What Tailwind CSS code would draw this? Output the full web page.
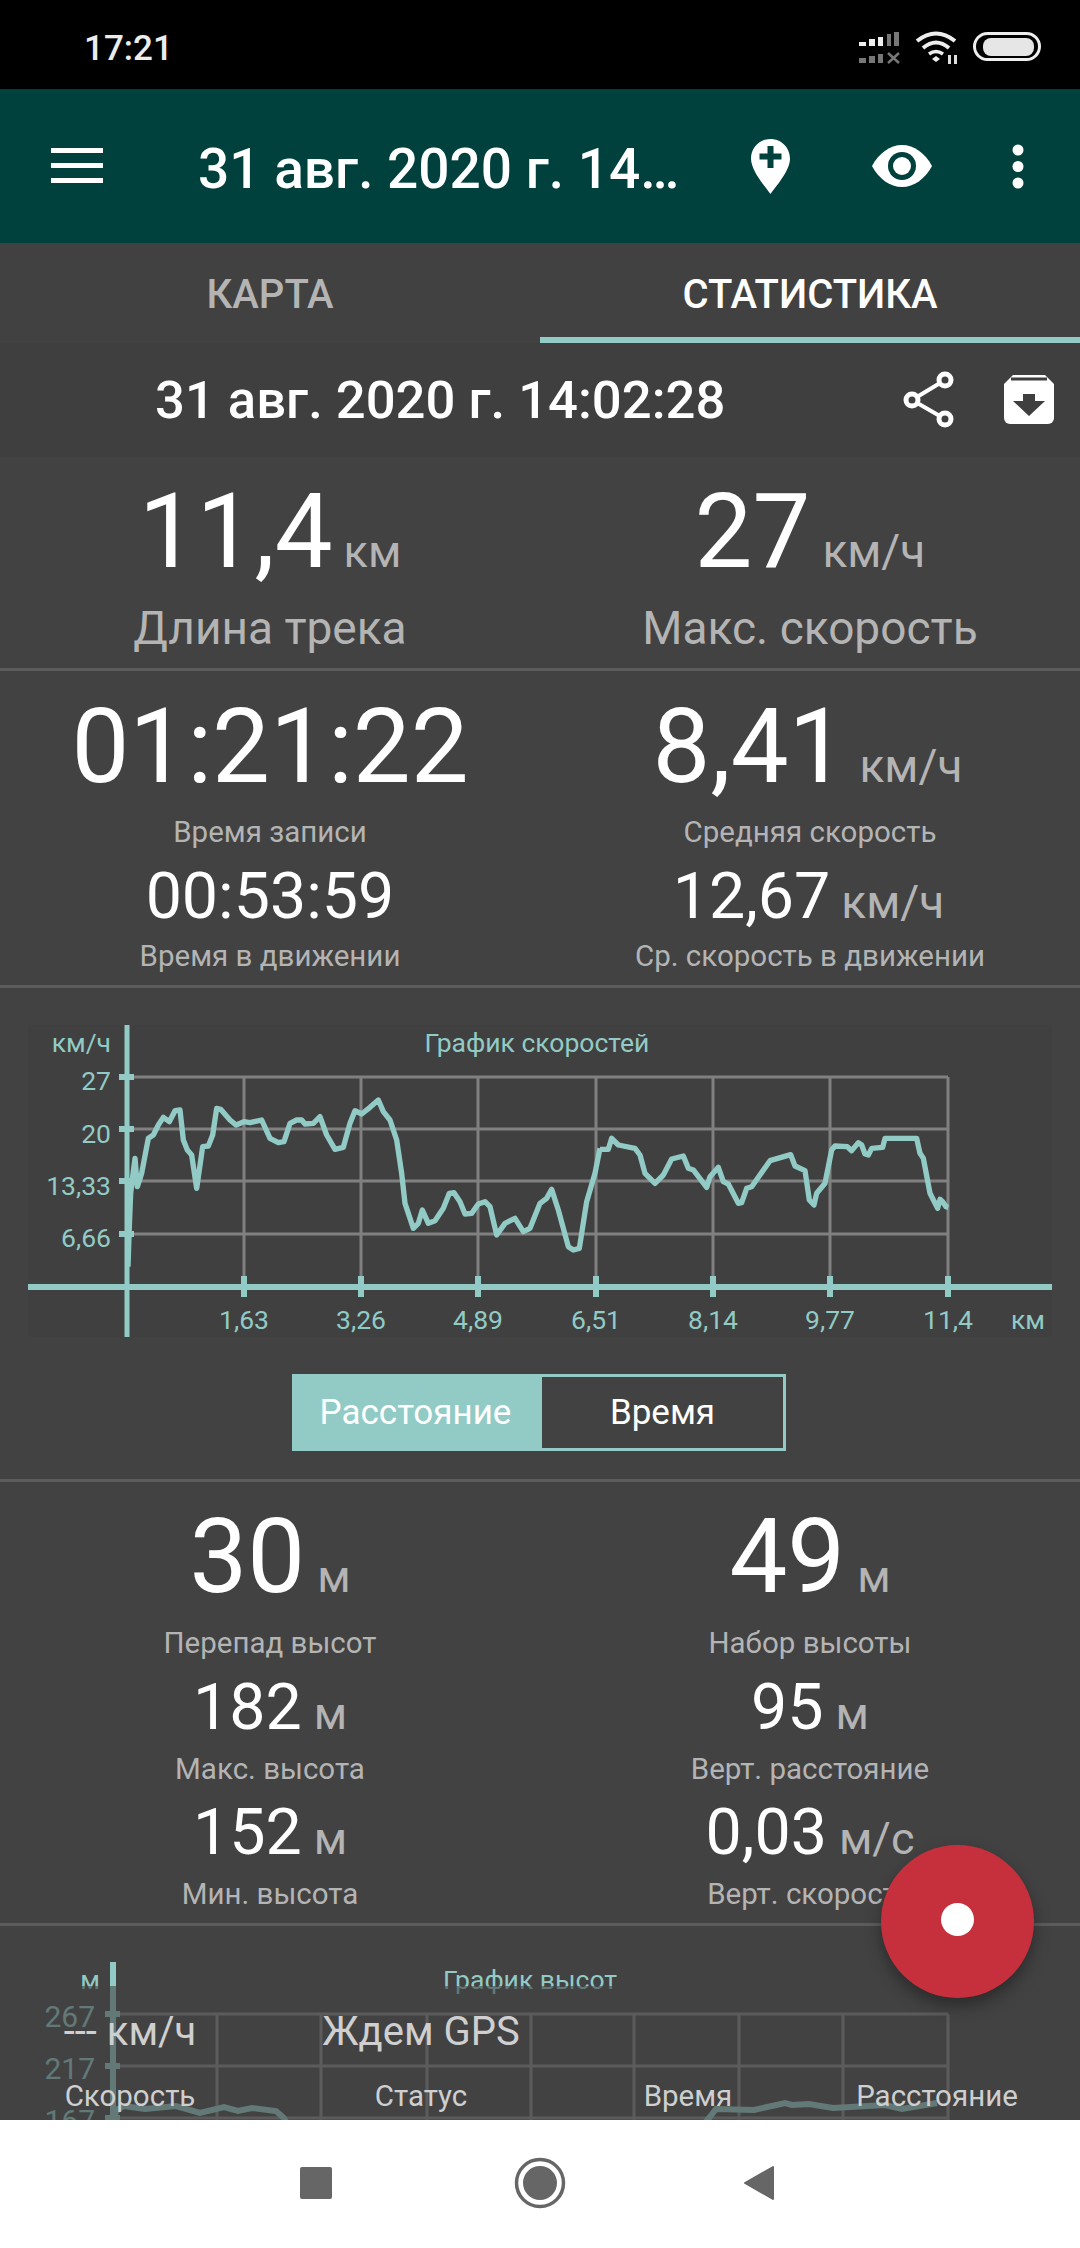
<!DOCTYPE html>
<html lang="ru">
<head>
  <meta charset="UTF-8" />
  <meta name="viewport" content="width=device-width, initial-scale=1.0"/>
  <title>Статистика трека</title>
  <script src="https://cdn.jsdelivr.net/npm/@tailwindcss/browser@4"></script>
</head>
<body class="bg-black">
<div class="relative w-[1080px] h-[2248px] overflow-hidden flex flex-col bg-[#424242] font-[Roboto,sans-serif] text-white">

  <!-- Status bar -->
  <div class="h-[89px] shrink-0 bg-black flex items-center pl-[84px] pr-[35px]">
    <span class="text-[35px] leading-[40px] font-medium text-[#ececec] mt-[8px]">17:21</span>
    <svg class="ml-auto mt-[7px]" width="190" height="36" viewBox="855 30 190 36" fill="none">
      <rect x="859" y="42" width="7" height="4" fill="#eee"/><rect x="869" y="39" width="6" height="7" fill="#eee"/><rect x="878" y="37" width="5" height="9" fill="#eee"/>
      <rect x="887" y="34" width="4" height="12" fill="#777"/><rect x="894" y="32" width="5" height="14" fill="#777"/>
      <rect x="859" y="58" width="7" height="5" fill="#777"/><rect x="869" y="56" width="6" height="7" fill="#777"/><rect x="878" y="54" width="5" height="9" fill="#777"/>
      <path d="M888 53l11 10m0-10l-11 10" stroke="#777" stroke-width="2.500"/>
      <path d="M917 41Q936 26 955 41" stroke="#eee" stroke-width="4"/><path d="M923 48Q936 37 949 48" stroke="#eee" stroke-width="4"/>
      <path d="M929 54Q936 49 943 54" stroke="#eee" stroke-width="3.500"/>
      <path d="M932 59l4-3 4 3-4 3z" fill="#eee"/>
      <path d="M948 55h3v9h-3zM954 55h3v9h-3z" fill="#ddd"/>
      <rect x="974.500" y="33.500" width="65" height="26" rx="13" stroke="#eee" stroke-width="3"/>
      <rect x="983" y="38" width="51" height="18" rx="8" fill="#e6e6e6"/>
    </svg>
  </div>

  <!-- Toolbar -->
  <div class="h-[154px] shrink-0 bg-[#00403d] flex items-center pl-[51px]">
    <div class="w-[52px] flex flex-col gap-[10px] -mt-[2px]">
      <div class="h-[5px] bg-white"></div>
      <div class="h-[5px] bg-white"></div>
      <div class="h-[5px] bg-white"></div>
    </div>
    <div class="ml-[95px] w-[490px] mt-[6px] truncate text-[55px] leading-[68px] font-medium">31 авг. 2020 г. 14:02:28</div>
    <svg class="ml-[63px]" width="39" height="55" viewBox="0 0 39 55">
      <path d="M19.500 0C8.700 0 0 8.700 0 19.500 0 31 12 45 19.500 55 27 45 39 31 39 19.500 39 8.700 30.300 0 19.500 0z" fill="#fff"/>
      <path d="M8.500 17.500h22M19.500 7v22" stroke="#00403d" stroke-width="6"/>
    </svg>
    <svg class="ml-[82px]" width="60" height="42" viewBox="0 0 60 42">
      <path d="M0 21C7 8 18 0 30 0s23 8 30 21c-7 13-18 21-30 21S7 34 0 21z" fill="#fff"/>
      <circle cx="30" cy="21" r="14" fill="#00403d"/><circle cx="30" cy="21" r="9" fill="#fff"/>
    </svg>
    <svg class="ml-[80px]" width="12" height="45" viewBox="0 0 12 45" fill="#fff">
      <circle cx="6" cy="6" r="5.500"/><circle cx="6" cy="22.500" r="5.500"/><circle cx="6" cy="39" r="5.500"/>
    </svg>
  </div>

  <!-- Tabs -->
  <div class="h-[100px] shrink-0 grid grid-cols-2 bg-[#414141] text-[40px] leading-[46px] font-medium">
    <div class="flex items-center justify-center text-[#b4b4b4] pt-[3px]">КАРТА</div>
    <div class="flex items-center justify-center border-b-[6px] border-[#92cbc5] pt-[9px]">СТАТИСТИКА</div>
  </div>

  <!-- Track header -->
  <div class="h-[114px] shrink-0 bg-[#3f3f3f] flex items-center pl-[155px]">
    <div class="w-[570px] text-[52.6px] leading-[60px] font-medium whitespace-nowrap">31 авг. 2020 г. 14:02:28</div>
    <svg class="ml-[178px]" width="42" height="54" viewBox="904 372 42 54" style="overflow:visible">
      <path d="M946 379L913 399L946 418" stroke="#fff" stroke-width="4" fill="none"/>
      <circle cx="946" cy="379" r="6" fill="#3f3f3f" stroke="#fff" stroke-width="5"/>
      <circle cx="913" cy="399" r="6" fill="#3f3f3f" stroke="#fff" stroke-width="5"/>
      <circle cx="946" cy="418" r="6" fill="#3f3f3f" stroke="#fff" stroke-width="5"/>
    </svg>
    <svg class="ml-[59px]" width="50" height="50" viewBox="1005 374 50 50">
      <path d="M1014 374h32l9 9v34a6 6 0 0 1-6 6h-38a6 6 0 0 1-6-6v-34z" fill="#fff"/>
      <path d="M1012 378h36" stroke="#3f3f3f" stroke-width="3"/>
      <path d="M1024 393h12v7h10l-16 15-16-15h10z" fill="#3f3f3f"/>
    </svg>
  </div>

  <!-- Scrolling stats -->
  <div class="relative flex-1 min-h-0 overflow-hidden">

    <!-- Track length and top speed -->
    <div class="grid grid-cols-2 pt-[16px] pb-[13px] border-b-[3px] border-[#5c5c5c]">
      <div class="flex flex-col items-center">
        <div class="h-[118px] flex items-baseline gap-[11px] leading-[118px]"><span class="text-[103px]">11,4</span><span class="text-[45px] text-[#b4b4b4]">км</span></div>
        <div class="mt-[10px] text-[46px] leading-[54px] text-[#b4b4b4]">Длина трека</div>
      </div>
      <div class="flex flex-col items-center">
        <div class="h-[118px] flex items-baseline gap-[12px] leading-[118px]"><span class="text-[103px]">27</span><span class="text-[46px] text-[#b4b4b4]">км/ч</span></div>
        <div class="mt-[10px] text-[46px] leading-[54px] text-[#b4b4b4]">Макс. скорость</div>
      </div>
    </div>

    <!-- Time and average speed -->
    <div class="grid grid-cols-2 pt-[17px] pb-[11px] border-b-[3px] border-[#5c5c5c]">
      <div class="flex flex-col items-center">
        <div class="h-[118px] text-[103px] leading-[118px]">01:21:22</div>
        <div class="mt-[8px] text-[29.5px] leading-[36px] text-[#b4b4b4]">Время записи</div>
        <div class="h-[76px] mt-[8px] text-[64.5px] leading-[76px]">00:53:59</div>
        <div class="mt-[4px] text-[29.5px] leading-[36px] text-[#b4b4b4]">Время в движении</div>
      </div>
      <div class="flex flex-col items-center">
        <div class="h-[118px] pr-[5px] flex items-baseline gap-[13px] leading-[118px]"><span class="text-[103px]">8,41</span><span class="text-[46px] text-[#b4b4b4]">км/ч</span></div>
        <div class="mt-[8px] text-[29.5px] leading-[36px] text-[#b4b4b4]">Средняя скорость</div>
        <div class="h-[76px] mt-[8px] pr-[3px] flex items-baseline gap-[11px] leading-[76px]"><span class="text-[64.5px]">12,67</span><span class="text-[46px] text-[#b4b4b4]">км/ч</span></div>
        <div class="mt-[4px] text-[29.5px] leading-[36px] text-[#b4b4b4]">Ср. скорость в движении</div>
      </div>
    </div>

    <!-- Speed chart -->
    <svg class="block mt-[2px] w-[1080px] h-[370px]" viewBox="0 990 1080 370" font-size="26.500" fill="#92cbc5">
      <rect x="28" y="1025" width="1024" height="312" fill="#404040"/>
      <g stroke="#808080" stroke-width="3" fill="none">
        <path d="M127 1077H948M127 1129H948M127 1181H948M127 1234H948"/>
        <path d="M244 1077V1287M361 1077V1287M478 1077V1287M596 1077V1287M713 1077V1287M830 1077V1287M948 1077V1287"/>
      </g>
      <g stroke="#92cbc5" fill="none">
        <path d="M127 1025V1337" stroke-width="5"/>
        <path d="M28 1287H1052" stroke-width="6"/>
        <path d="M119 1077H134M119 1129H134M119 1181H134M119 1234H134" stroke-width="6"/>
        <path d="M244 1276V1297M361 1276V1297M478 1276V1297M596 1276V1297M713 1276V1297M830 1276V1297M948 1276V1297" stroke-width="6"/>
      </g>
      <g transform="translate(100 1060) scale(.33333)" stroke="#92cbc5" stroke-width="16" fill="none" stroke-linejoin="round">
        <polyline points="84,620 88,500 92,400 98,350 105,295 112,380 125,340 145,235 160,225 175,195 190,172 208,185 225,152 240,150 250,240 262,270 275,285 290,385 308,260 325,258 338,225 350,145 362,148 390,180 408,195 432,185 450,188 485,180 510,235 535,248 552,245 570,190 590,180 605,180 615,192 640,190 660,170 680,225 705,268 730,262 750,190 765,152 785,162 810,142 835,120 850,155 870,180 890,240 905,340 915,430 940,505 955,490 967,450 985,490 1005,482 1030,445 1048,400 1062,398 1080,425 1095,462 1115,460 1135,432 1155,425 1170,440 1190,525 1215,490 1245,475 1270,515 1290,505 1320,430 1340,415 1355,388 1375,450 1405,560 1420,570 1438,565 1460,425 1485,340 1500,265"/>
      </g>
      <g transform="translate(560 1060) scale(.33333)" stroke="#92cbc5" stroke-width="16" fill="none" stroke-linejoin="round">
        <polyline points="120,268 145,268 155,235 175,255 225,265 240,285 255,340 285,370 310,345 335,297 370,288 385,325 400,330 440,382 450,350 475,322 490,365 505,372 535,430 545,428 560,385 575,380 630,302 692,284 705,318 735,332 748,420 762,435 770,400 795,370 815,270 825,258 862,260 875,272 895,248 905,255 915,282 925,285 935,265 968,262 975,235 1070,235 1080,280 1090,295 1110,400 1133,445 1140,418 1148,425 1158,440 1165,442"/>
      </g>
      <g text-anchor="end">
        <text x="111" y="1052">км/ч</text>
        <text x="111" y="1090">27</text>
        <text x="111" y="1143">20</text>
        <text x="111" y="1195">13,33</text>
        <text x="111" y="1247">6,66</text>
        <text x="1045" y="1329">км</text>
      </g>
      <g text-anchor="middle">
        <text x="537" y="1052">График скоростей</text>
        <text x="244" y="1329">1,63</text>
        <text x="361" y="1329">3,26</text>
        <text x="478" y="1329">4,89</text>
        <text x="596" y="1329">6,51</text>
        <text x="713" y="1329">8,14</text>
        <text x="830" y="1329">9,77</text>
        <text x="948" y="1329">11,4</text>
      </g>
    </svg>

    <!-- Distance / time switch -->
    <div class="mt-[14px] ml-[292px] w-[494px] h-[77px] flex border-[3px] border-[#92cbc5] text-[35px] leading-[42px]">
      <div class="w-[247px] bg-[#92cbc5] flex items-center justify-center pr-[6px]">Расстояние</div>
      <div class="flex-1 flex items-center justify-center">Время</div>
    </div>
    <div class="mt-[28px] border-b-[3px] border-[#5c5c5c]"></div>

    <!-- Elevation -->
    <div class="grid grid-cols-2 pt-[16px] pb-[11px] border-b-[3px] border-[#5c5c5c]">
      <div class="flex flex-col items-center">
        <div class="h-[118px] flex items-baseline gap-[12px] leading-[118px]"><span class="text-[103px]">30</span><span class="text-[45px] text-[#b4b4b4]">м</span></div>
        <div class="mt-[9px] text-[29.5px] leading-[36px] text-[#b4b4b4]">Перепад высот</div>
        <div class="h-[76px] mt-[8px] flex items-baseline gap-[12px] leading-[76px]"><span class="text-[64.5px]">182</span><span class="text-[45px] text-[#b4b4b4]">м</span></div>
        <div class="mt-[6px] text-[29.5px] leading-[36px] text-[#b4b4b4]">Макс. высота</div>
        <div class="h-[76px] mt-[7px] flex items-baseline gap-[12px] leading-[76px]"><span class="text-[64.5px]">152</span><span class="text-[45px] text-[#b4b4b4]">м</span></div>
        <div class="mt-[6px] text-[29.5px] leading-[36px] text-[#b4b4b4]">Мин. высота</div>
      </div>
      <div class="flex flex-col items-center">
        <div class="h-[118px] flex items-baseline gap-[12px] leading-[118px]"><span class="text-[103px]">49</span><span class="text-[45px] text-[#b4b4b4]">м</span></div>
        <div class="mt-[9px] text-[29.5px] leading-[36px] text-[#b4b4b4]">Набор высоты</div>
        <div class="h-[76px] mt-[8px] flex items-baseline gap-[12px] leading-[76px]"><span class="text-[64.5px]">95</span><span class="text-[45px] text-[#b4b4b4]">м</span></div>
        <div class="mt-[6px] text-[29.5px] leading-[36px] text-[#b4b4b4]">Верт. расстояние</div>
        <div class="h-[76px] mt-[7px] flex items-baseline gap-[12px] leading-[76px]"><span class="text-[64.5px]">0,03</span><span class="text-[45px] text-[#b4b4b4]">м/с</span></div>
        <div class="mt-[6px] text-[29.5px] leading-[36px] text-[#b4b4b4]">Верт. скорость</div>
      </div>
    </div>

    <!-- Elevation chart, cut off by the live panel and the nav bar -->
    <svg class="block w-[1080px] h-[197px]" viewBox="0 1925 1080 197" font-size="26.500" fill="#92cbc5">
      <g stroke="#808080" stroke-width="3" fill="none">
        <path d="M112 2013H948M112 2065H948M112 2117H948"/>
        <path d="M217 2013V2121M321 2013V2121M427 2013V2121M531 2013V2121M634 2013V2121M739 2013V2121M843 2013V2121M948 2013V2121"/>
      </g>
      <g stroke="#92cbc5" fill="none">
        <path d="M113 1961V2121" stroke-width="6"/>
        <path d="M105 2013H120M105 2065H120M105 2117H120" stroke-width="6"/>
      </g>
      <polyline points="112,2118 118,2108 124,2105 145,2108 176,2105 200,2112 224,2106 238,2110 252,2107 276,2110 284,2117 287,2123" fill="none" stroke="#92cbc5" stroke-width="6"/>
      <polyline points="704,2123 709,2117 716,2108 754,2109 785,2102 792,2104 809,2103 833,2107 885,2104 902,2108 937,2102" fill="none" stroke="#92cbc5" stroke-width="6"/>
      <text x="100" y="1988" text-anchor="end">м</text>
      <text x="530" y="1988" text-anchor="middle">График высот</text>
      <g text-anchor="end" font-size="30">
        <text x="95" y="2026">267</text>
        <text x="95" y="2078">217</text>
        <text x="95" y="2130">167</text>
      </g>
    </svg>

    <!-- Live GPS panel over the chart -->
    <div class="absolute left-0 right-0 bottom-0 h-[134px] bg-[#424242]/60 grid grid-cols-[260px_322px_212px_286px] text-center text-[#cfcfcf]">
      <div class="flex flex-col items-center">
        <div class="h-[92px] pt-[20px] text-[40px] leading-[52px]">--- км/ч</div>
        <div class="text-[29.5px] leading-[36px]">Скорость</div>
      </div>
      <div class="flex flex-col items-center">
        <div class="h-[92px] pt-[20px] text-[40px] leading-[52px]">Ждем GPS</div>
        <div class="text-[29.5px] leading-[36px]">Статус</div>
      </div>
      <div class="flex flex-col items-center">
        <div class="h-[92px]"></div>
        <div class="text-[29.5px] leading-[36px]">Время</div>
      </div>
      <div class="flex flex-col items-center">
        <div class="h-[92px]"></div>
        <div class="text-[29.5px] leading-[36px]">Расстояние</div>
      </div>
    </div>
  </div>

  <!-- Nav bar -->
  <div class="h-[128px] shrink-0 bg-white flex items-center pb-[3px]">
    <div class="ml-[300px] w-[32px] h-[32px] rounded-[2px] bg-[#666666]"></div>
    <svg class="ml-[182px]" width="52" height="52" viewBox="0 0 52 52">
      <circle cx="26" cy="26" r="23.500" fill="none" stroke="#666666" stroke-width="3.500"/>
      <circle cx="26" cy="26" r="17" fill="#666666"/>
    </svg>
    <svg class="ml-[177px]" width="32" height="36" viewBox="0 0 32 36">
      <path d="M30 2v32L2 18z" fill="#666666" stroke="#666666" stroke-width="2" stroke-linejoin="round"/>
    </svg>
  </div>

  <!-- Record button -->
  <div class="absolute right-[46px] bottom-[250px] w-[153px] h-[153px] rounded-full bg-[#c6303c] shadow-[0_8px_16px_rgba(0,0,0,0.35)] flex items-center justify-center">
    <div class="w-[33px] h-[33px] rounded-full bg-white -mt-[4px]"></div>
  </div>
</div>
</body>
</html>
